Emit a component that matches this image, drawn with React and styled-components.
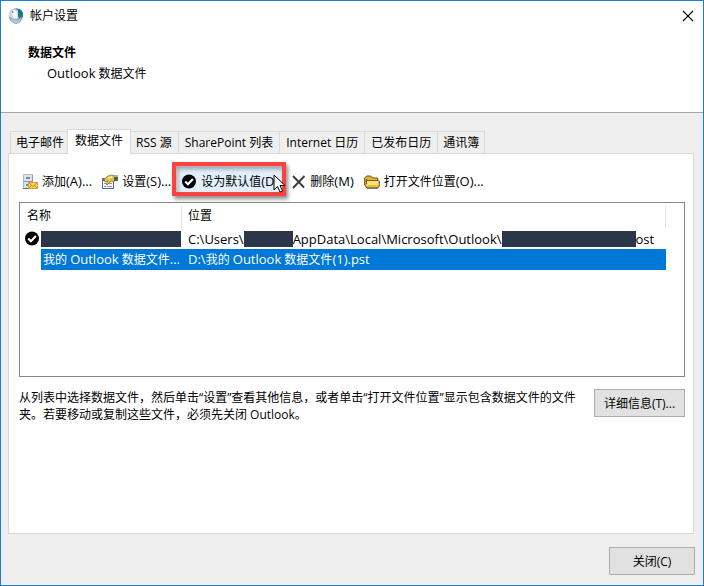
import React, { Component } from 'react';
import styled, { createGlobalStyle } from 'styled-components';

const GlobalStyle = createGlobalStyle`
  * {
    box-sizing: border-box;
  }
  body {
    margin: 0;
    color: #000;
    font-family: 'Open Sans', 'Noto Sans CJK SC', sans-serif;
    font-size: 12px;
    line-height: 18px;
  }
  button {
    color: inherit;
    font: inherit;
    white-space: nowrap;
  }
`

const Dialog = styled.div`
  display: flex;
  flex-direction: column;
  min-height: 100vh;
  border: 1px solid #1a7fd4;
  background: #efefef;
`

const Header = styled.header`
  min-height: 112px;
  border-bottom: 1px solid #a5a5a5;
  background: #fff;
`

const TitleBar = styled.div`
  display: flex;
  align-items: center;
  gap: 6px;
  height: 29px;
  padding: 0 5px 0 7px;
`

const CloseIcon = styled.button`
  display: flex;
  margin-left: auto;
  padding: 4px;
  border: 0;
  background: none;
`

const Heading = styled.div`
  padding: 14px 27px;

  h1 {
    margin: 0;
    font-size: 12px;
    font-weight: bold;
  }
  p {
    margin: 3px 19px 0;
  }
`

// latin text runs one size larger than the chinese around it
const Latin = styled.span`
  font-size: 13px;
  line-height: 16px;
`

const Body = styled.main`
  display: flex;
  flex: 1;
  flex-direction: column;
  padding: 16px 9px 10px 7px;
`

const Tabs = styled.div`
  display: flex;
  align-items: flex-end;
  padding-left: 1px;
`

const Tab = styled.button`
  height: ${props => props.$active ? 25 : 22}px;
  margin: ${props => props.$active ? '0 -1px -1px -3px' : '0 0 0 -1px'};
  padding: ${props => props.$active ? '0 7px 2px' : '0 6px'};
  border: 1px solid #d9d9d9;
  border-bottom: 0;
  background: ${props => props.$active ? '#fff' : '#efefef'};
  position: relative;
  z-index: ${props => props.$active ? 1 : 0};

  &:first-child {
    margin-left: 1px;
    padding: 0 5px;
  }
  &:last-child {
    padding: 0 5px;
  }
`

const Panel = styled.section`
  flex: 1;
  padding: 13px 8px 13px 10px;
  border: 1px solid #d9d9d9;
  background: #fff;
`

const Toolbar = styled.div`
  display: flex;
  gap: 3px;
  height: 28px;
  margin-bottom: 7px;
`

const ToolButton = styled.button`
  display: flex;
  align-items: center;
  gap: 4px;
  position: relative;
  padding: 2px ${props => props.$hot ? 8 : 4}px 0 3px;
  border: 0;
  background: ${props => props.$hot ? '#e3f0fb' : 'none'};
`

const Highlight = styled.span`
  position: absolute;
  inset: -5px 0 -1px -6px;
  border: 4px solid #fb4142;
  box-shadow: 2px 3px 4px rgba(0, 0, 0, 0.45), inset 2px 3px 4px rgba(0, 0, 0, 0.35);
`

const Pointer = styled.svg`
  position: absolute;
  right: 0;
  bottom: 1px;
`

const List = styled.div`
  min-height: 175px;
  padding-right: 18px;
  border: 1px solid #828790;
`

const FileTable = styled.table`
  width: 100%;
  border-collapse: collapse;
  table-layout: fixed;

  th {
    height: 25px;
    padding: 0 7px;
    font-weight: normal;
    text-align: left;
    background: linear-gradient(#e5e5e5, #e5e5e5) right bottom / 1px 23px no-repeat;
  }
  th + th {
    padding: 0 6px;
  }
  td {
    height: 21px;
    padding: 0;
    overflow: hidden;
    white-space: nowrap;
    line-height: 18px;
  }
`

const TickCol = styled.col`
  width: 21px;
`

const NameCol = styled.col`
  width: 141px;
`

const Cell = styled.td`
  background: ${props => props.$selected ? '#0078d7' : 'none'};
  color: ${props => props.$selected ? '#fff' : '#000'};
`

const CellText = styled.div`
  display: flex;
  align-items: center;
  padding-left: ${props => props.$indent || 0}px;
`

const Redacted = styled.span`
  flex: none;
  width: ${props => props.$width}px;
  height: 16px;
  background: #2b3648;
`

const Note = styled.div`
  display: flex;
  align-items: flex-start;
  gap: 12px;
  padding-top: 12px;

  p {
    flex: 1;
    margin: 0;
    line-height: 17px;
  }
`

const PushButton = styled.button`
  min-width: ${props => props.$width}px;
  height: 28px;
  padding: 1px 7px 0;
  border: 1px solid #adadad;
  background: #e1e1e1;
`

const Footer = styled.footer`
  display: flex;
  justify-content: flex-end;
  padding: 3px 8px 10px;
`

const GlobeIcon = () => (
  <svg width="16" height="16" viewBox="0 0 16 16">
    <circle cx="8" cy="7.5" r="7.2" fill="#91a9c6" />
    <path d="M8 .5a7 7 0 0 1 7 8l-3 2-3-3 1-4z" fill="#20894e" />
    <path d="M10 1c3 0 5 3 5 5l-3 1z" fill="#2165b0" />
    <path d="M1 5l4-4 5 1v9l-4 2-5-4z" fill="#c9d9ea" />
    <path d="M3 4l3-2 3 2v6H6z" fill="#f9fbfd" />
    <path d="M1 9l5 3 5-1 3-2-2 5-4 2-5-3z" fill="#b3c5dd" stroke="#7188ab" strokeWidth=".6" />
    <circle cx="4.5" cy="4" r=".9" fill="#d9534f" />
  </svg>
)

const AddIcon = () => (
  <svg width="16" height="16" viewBox="0 0 16 16">
    <path d="M1.5.5h9v14h-9z" fill="#dde3ea" stroke="#b3bcc8" />
    <path d="M10.5 1v8M1 7.5h10" fill="none" stroke="#8f9cac" />
    <path d="M4 4h4M4 11h3" fill="none" stroke="#7d8a9b" strokeWidth="2" />
    <path d="M1 14.5h7" stroke="#5f6c7c" />
    <path d="M6.5 8.5h9v6h-9z" fill="#fbd761" stroke="#d09f2c" />
    <path d="M7 9l4 3.5L15 9M7 14l3-3M15 14l-3-3" fill="none" stroke="#b07d16" strokeWidth=".8" />
  </svg>
)

const SettingsIcon = () => (
  <svg width="16" height="16" viewBox="0 0 16 16">
    <path d="M.5 4.5h11v10H.5z" fill="#f6f9fd" stroke="#566b88" />
    <path d="M1 5h10v2H1z" fill="#3d78c6" />
    <path d="M2 9.5h2M2 12.5h2M5 9.5h5M5 12.5h5" stroke="#8296b3" />
    <path d="M2 5l4-3 4-1 3 1v5l-2 1-2-1-4 4-1-1 2-3-3 1z" fill="#e6bd45" stroke="#8a6b1d" strokeWidth=".7" />
    <path d="M5 4l4-2 2 1-4 2z" fill="#fff0a3" />
    <path d="M12 1h4v6h-4z" fill="#45684d" />
    <path d="M12 1h4v2h-4z" fill="#9fb3a0" />
  </svg>
)

const CheckIcon = () => (
  <svg width="16" height="16" viewBox="0 0 16 16">
    <circle cx="8" cy="7.5" r="7" fill="#000" />
    <path d="M4.2 7.5l2.7 2.7L11.900 5" fill="none" stroke="#fff" strokeWidth="2.2" />
  </svg>
)

const DeleteIcon = () => (
  <svg width="14" height="16" viewBox="0 0 14 16">
    <path d="M1 2l11 11.5M12.5 2L1 14" fill="none" stroke="#3c3c3c" strokeWidth="1.9" />
  </svg>
)

const FolderIcon = () => (
  <svg width="16" height="16" viewBox="0 0 16 16">
    <path d="M.7 11V4l2-2h4l2 2h5v3h1.6v5l-1.5 2H3z" fill="#e1b63b" stroke="#6b4c0f" />
    <path d="M3 6.5h11M2.5 5v5" stroke="#7b5713" />
    <path d="M3 7h11.5v4l-1 2H4l-1-2z" fill="#ffe47b" />
    <path d="M4 11h10v2H4z" fill="#e9bd3d" />
    <path d="M3 14.5h11" stroke="#777" />
  </svg>
)

const Mixed = ({ text }) => (
  <span>
    {text.split(/([\x21-\x7e]+)/).map((part, i) => i % 2 ? <Latin key={i}>{part}</Latin> : part)}
  </span>
)

class AccountSettings extends Component {
  constructor(){
    super();
    this.state = {
      tab: '数据文件',
      tabs: ['电子邮件', '数据文件', 'RSS 源', 'SharePoint 列表', 'Internet 日历', '已发布日历', '通讯簿']
    }
  }

  _selectTab = (tab) => {
    this.setState({ tab })
  }

  render(){
    return (
      <Dialog>
        <GlobalStyle />
        <Header>
          <TitleBar>
            <GlobeIcon />
            <span>帐户设置</span>
            <CloseIcon aria-label="关闭窗口">
              <svg width="12" height="12" viewBox="0 0 12 12">
                <path d="M1 1l10 10M11 1L1 11" stroke="#000" strokeWidth="1.1" />
              </svg>
            </CloseIcon>
          </TitleBar>
          <Heading>
            <h1>数据文件</h1>
            <p><Mixed text="Outlook 数据文件" /></p>
          </Heading>
        </Header>

        <Body>
          <Tabs role="tablist">
            {this.state.tabs.map(tab => (
              <Tab
                key={tab}
                role="tab"
                aria-selected={tab === this.state.tab}
                $active={tab === this.state.tab}
                onClick={() => this._selectTab(tab)}
              >
                {tab}
              </Tab>
            ))}
          </Tabs>

          <Panel>
            <Toolbar>
              <ToolButton><AddIcon /><Mixed text="添加(A)..." /></ToolButton>
              <ToolButton><SettingsIcon /><Mixed text="设置(S)..." /></ToolButton>
              <ToolButton $hot>
                <CheckIcon /><Mixed text="设为默认值(D)" />
                <Highlight />
                <Pointer width="13" height="20" viewBox="0 0 13 20">
                  <path d="M1 1v15l3.5-3.5L7 18l2.5-1-2.5-5.5h5z" fill="#fff" stroke="#000" />
                </Pointer>
              </ToolButton>
              <ToolButton><DeleteIcon /><Mixed text="删除(M)" /></ToolButton>
              <ToolButton><FolderIcon /><Mixed text="打开文件位置(O)..." /></ToolButton>
            </Toolbar>

            <List>
              <FileTable>
                <colgroup>
                  <TickCol />
                  <NameCol />
                  <col />
                </colgroup>
                <thead>
                  <tr>
                    <th colSpan="2">名称</th>
                    <th>位置</th>
                  </tr>
                </thead>
                <tbody>
                  <tr>
                    <Cell><CellText $indent={4}><CheckIcon /></CellText></Cell>
                    <Cell><Redacted as="div" $width={140} /></Cell>
                    <Cell>
                      <CellText $indent={6}>
                        <Latin>C:\Users\</Latin>
                        <Redacted $width={49} />
                        <Latin>AppData\Local\Microsoft\Outlook\</Latin>
                        <Redacted $width={134} />
                        <Latin>ost</Latin>
                      </CellText>
                    </Cell>
                  </tr>
                  <tr>
                    <Cell />
                    <Cell $selected><CellText $indent={2}><Mixed text="我的 Outlook 数据文件..." /></CellText></Cell>
                    <Cell $selected><CellText $indent={6}><Mixed text="D:\我的 Outlook 数据文件(1).pst" /></CellText></Cell>
                  </tr>
                </tbody>
              </FileTable>
            </List>

            <Note>
              <p>从列表中选择数据文件，然后单击“设置”查看其他信息，或者单击“打开文件位置”显示包含数据文件的文件夹。若要移动或复制这些文件，必须先关闭 Outlook。</p>
              <PushButton $width={91}>详细信息(T)...</PushButton>
            </Note>
          </Panel>
        </Body>

        <Footer>
          <PushButton $width={86}>关闭(C)</PushButton>
        </Footer>
      </Dialog>
    );
  }
}

export default AccountSettings;
